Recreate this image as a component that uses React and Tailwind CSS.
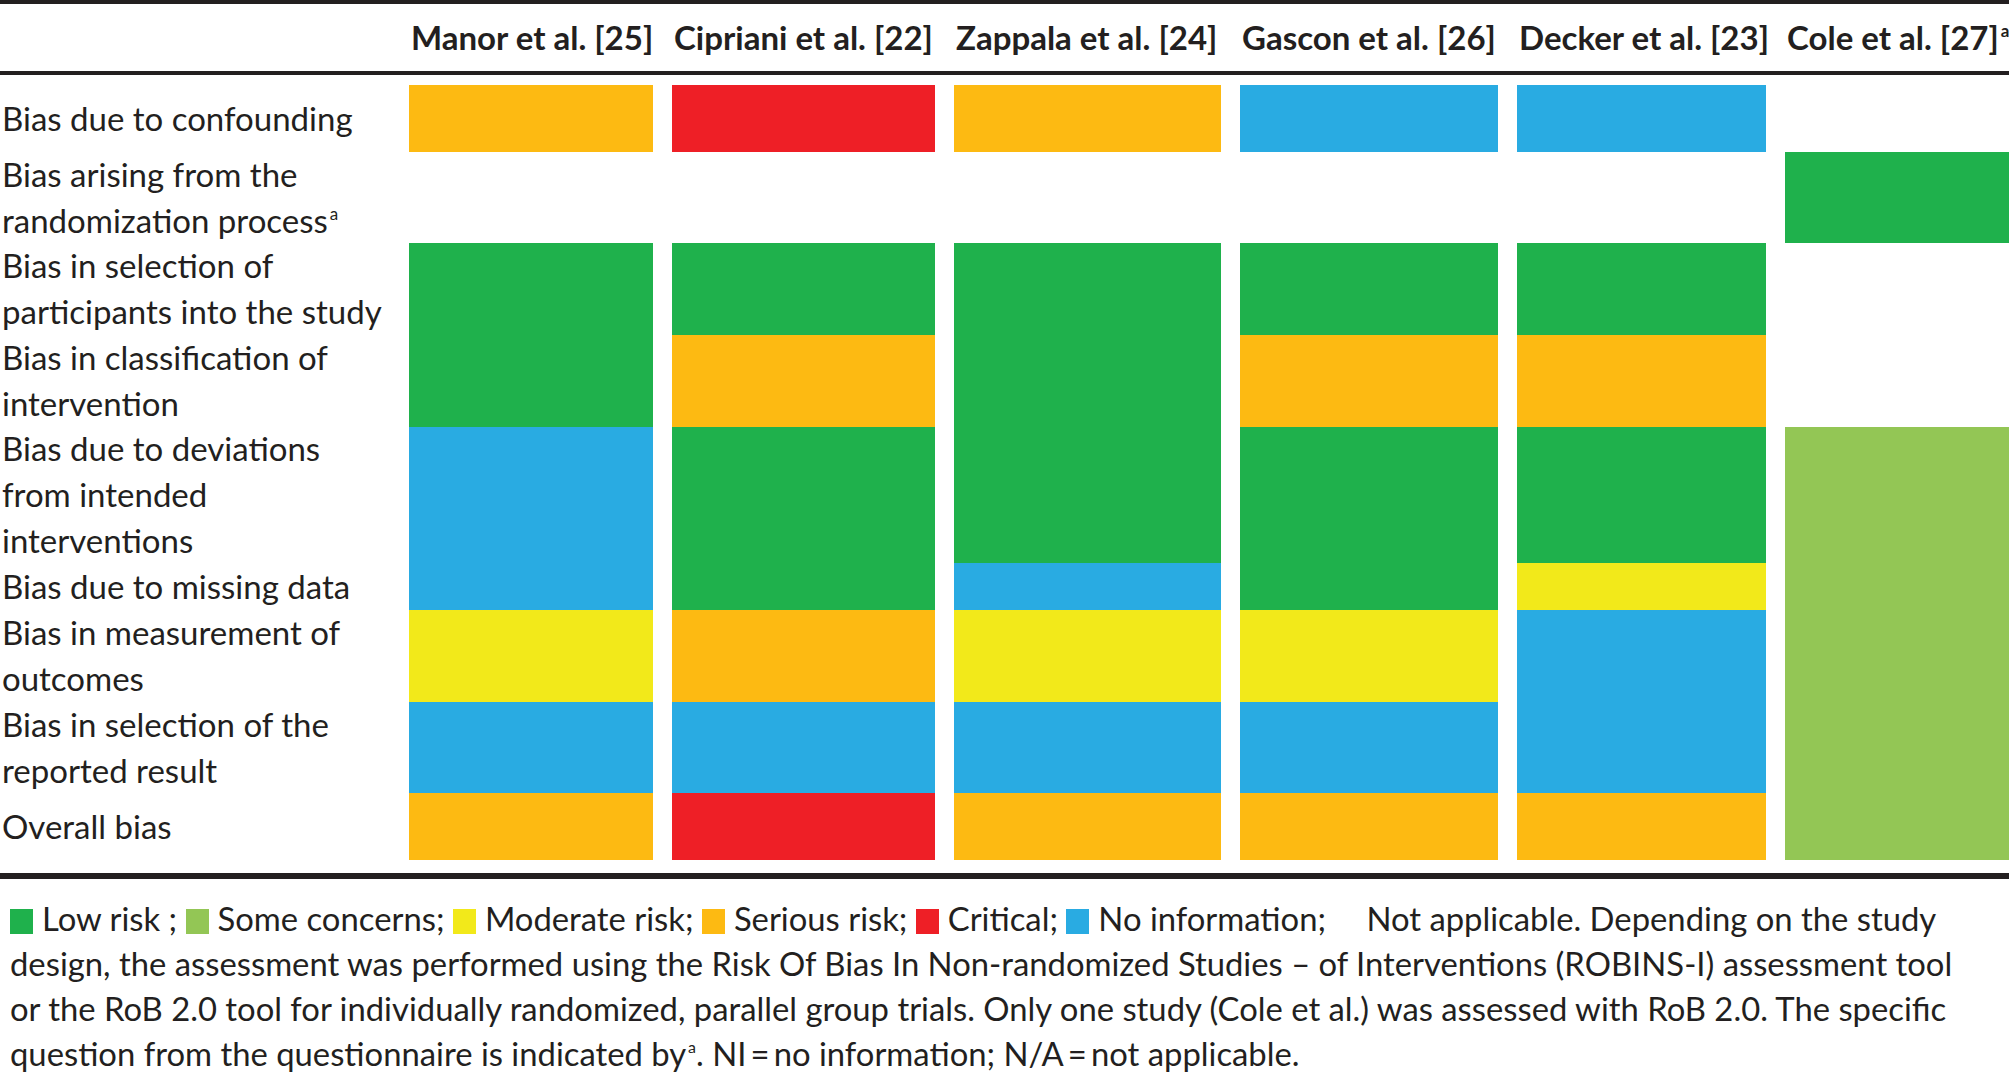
import React from "react";

const COLOR = {
  g: "bg-[#1fb14c]",
  lg: "bg-[#93c655]",
  y: "bg-[#f2e91a]",
  o: "bg-[#fdba12]",
  r: "bg-[#ee1f26]",
  b: "bg-[#29abe2]",
};

const studies = [
  { name: "Manor et al. [25]", col: "col-start-2" },
  { name: "Cipriani et al. [22]", col: "col-start-3" },
  { name: "Zappala et al. [24]", col: "col-start-4" },
  { name: "Gascon et al. [26]", col: "col-start-5" },
  { name: "Decker et al. [23]", col: "col-start-6" },
  { name: "Cole et al. [27]", col: "col-start-7", sup: true },
];

const labels = [
  { row: "row-start-1", lines: ["Bias due to confounding"] },
  { row: "row-start-2", lines: ["Bias arising from the", "randomization process"], sup: true },
  { row: "row-start-3", lines: ["Bias in selection of", "participants into the study"] },
  { row: "row-start-4", lines: ["Bias in classification of", "intervention"] },
  { row: "row-start-5", lines: ["Bias due to deviations", "from intended", "interventions"] },
  { row: "row-start-6", lines: ["Bias due to missing data"] },
  { row: "row-start-7", lines: ["Bias in measurement of", "outcomes"] },
  { row: "row-start-8", lines: ["Bias in selection of the", "reported result"] },
  { row: "row-start-9", lines: ["Overall bias"] },
];

// [column, row start, span, colour]
const cells = [
  ["col-start-2", "row-start-1", "row-span-1", "o"],
  ["col-start-2", "row-start-3", "row-span-2", "g"],
  ["col-start-2", "row-start-5", "row-span-2", "b"],
  ["col-start-2", "row-start-7", "row-span-1", "y"],
  ["col-start-2", "row-start-8", "row-span-1", "b"],
  ["col-start-2", "row-start-9", "row-span-1", "o"],

  ["col-start-3", "row-start-1", "row-span-1", "r"],
  ["col-start-3", "row-start-3", "row-span-1", "g"],
  ["col-start-3", "row-start-4", "row-span-1", "o"],
  ["col-start-3", "row-start-5", "row-span-2", "g"],
  ["col-start-3", "row-start-7", "row-span-1", "o"],
  ["col-start-3", "row-start-8", "row-span-1", "b"],
  ["col-start-3", "row-start-9", "row-span-1", "r"],

  ["col-start-4", "row-start-1", "row-span-1", "o"],
  ["col-start-4", "row-start-3", "row-span-3", "g"],
  ["col-start-4", "row-start-6", "row-span-1", "b"],
  ["col-start-4", "row-start-7", "row-span-1", "y"],
  ["col-start-4", "row-start-8", "row-span-1", "b"],
  ["col-start-4", "row-start-9", "row-span-1", "o"],

  ["col-start-5", "row-start-1", "row-span-1", "b"],
  ["col-start-5", "row-start-3", "row-span-1", "g"],
  ["col-start-5", "row-start-4", "row-span-1", "o"],
  ["col-start-5", "row-start-5", "row-span-2", "g"],
  ["col-start-5", "row-start-7", "row-span-1", "y"],
  ["col-start-5", "row-start-8", "row-span-1", "b"],
  ["col-start-5", "row-start-9", "row-span-1", "o"],

  ["col-start-6", "row-start-1", "row-span-1", "b"],
  ["col-start-6", "row-start-3", "row-span-1", "g"],
  ["col-start-6", "row-start-4", "row-span-1", "o"],
  ["col-start-6", "row-start-5", "row-span-1", "g"],
  ["col-start-6", "row-start-6", "row-span-1", "y"],
  ["col-start-6", "row-start-7", "row-span-2", "b"],
  ["col-start-6", "row-start-9", "row-span-1", "o"],

  ["col-start-7", "row-start-2", "row-span-1", "g"],
  ["col-start-7", "row-start-5", "row-span-5", "lg"],
];

const COLS = "grid-cols-[390px_244px_263px_267px_258px_249px_224px] gap-x-[19px]";

function Swatch({ color }) {
  return <span className={`mr-[9px] inline-block h-[25px] w-[23px] align-[-3px] ${color}`} />;
}

function Sup({ size }) {
  return <span className={`relative -top-[13px] ml-[2px] leading-none ${size}`}>a</span>;
}

export default function App() {
  return (
    <div className="h-[1074px] w-[2009px] overflow-hidden bg-white font-['Lato','Liberation_Sans',sans-serif] text-[#231f20]">
      <div className="h-[4px] bg-[#231f20]" />

      <div className={`grid h-[67px] items-center ${COLS}`}>
        {studies.map((s) => (
          <div key={s.name} className={`${s.col} whitespace-nowrap pl-[2px] text-[33px] font-bold leading-none`}>
            {s.name}
            {s.sup && <Sup size="text-[17px]" />}
          </div>
        ))}
      </div>

      <div className="h-[4px] bg-[#231f20]" />

      <div className={`mt-[10px] grid grid-rows-[67px_91px_92px_92px_136px_47px_92px_91px_67px] ${COLS}`}>
        {labels.map((l) => (
          <div key={l.row} className={`col-start-1 ${l.row} flex items-center whitespace-nowrap pl-[2px] text-[33px] leading-[45.8px]`}>
            <div>
              {l.lines.map((line, i) => (
                <div key={i}>
                  {line}
                  {l.sup && i === l.lines.length - 1 && <Sup size="text-[17px]" />}
                </div>
              ))}
            </div>
          </div>
        ))}
        {cells.map(([col, row, span, c], i) => (
          <div key={i} className={`${col} ${row} ${span} ${COLOR[c]}`} />
        ))}
      </div>

      <div className="mt-[13px] h-[6px] bg-[#231f20]" />

      <div className="whitespace-nowrap pl-[10px] pt-[17px] text-[32.8px] leading-[45px]">
        <div>
          <Swatch color={COLOR.g} />Low risk ; <Swatch color={COLOR.lg} />Some concerns; <Swatch color={COLOR.y} />Moderate risk;{" "}
          <Swatch color={COLOR.o} />Serious risk; <Swatch color={COLOR.r} />Critical; <Swatch color={COLOR.b} />No information;{" "}
          <Swatch color="bg-white" />Not applicable. Depending on the study
        </div>
        <div>
          design, the assessment was performed using the Risk Of Bias In Non-randomized Studies – of Interventions (ROBINS-I) assessment tool
        </div>
        <div>
          or the RoB 2.0 tool for individually randomized, parallel group trials. Only one study (Cole et al.) was assessed with RoB 2.0. The specific
        </div>
        <div>
          question from the questionnaire is indicated by<Sup size="text-[16px]" />. NI{"\u2009=\u2009"}no information; N/A{"\u2009=\u2009"}not applicable.
        </div>
      </div>
    </div>
  );
}
